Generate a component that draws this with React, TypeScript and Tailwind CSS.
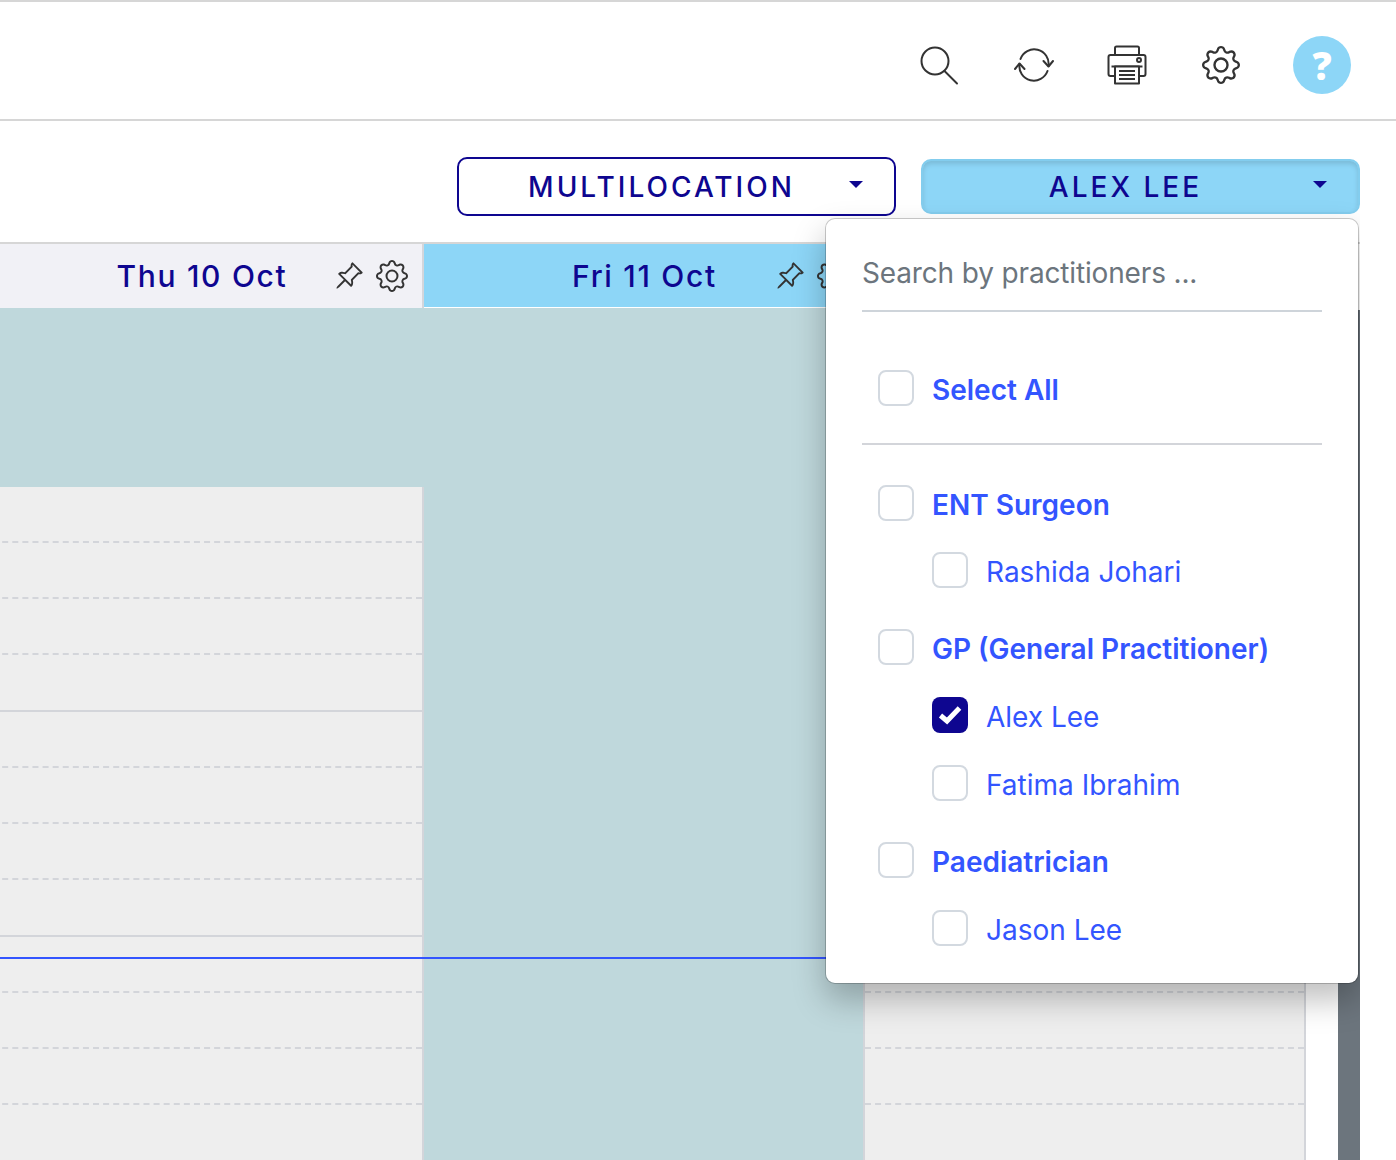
import { BsGear, BsPinAngle } from "react-icons/bs";

const navy = "text-[#0e0690]";

function SearchIcon() {
  return (
    <svg width="40" height="40" viewBox="0 0 40 40" fill="none" stroke="#333" strokeWidth="2">
      <circle cx="16" cy="16" r="13.5" />
      <path d="M25.5 26 L38 38.5" strokeLinecap="round" />
    </svg>
  );
}

function SyncIcon() {
  return (
    <svg className="ml-[2px]" width="40" height="34" viewBox="0 0 40 34" fill="none" stroke="#333" strokeWidth="2" strokeLinecap="round" strokeLinejoin="round">
      <path d="M6.500 11 A14.500 14.500 0 0 1 34.500 18" />
      <path d="M33.500 23 A14.500 14.500 0 0 1 5.500 16" />
      <path d="M29.500 13 L34.500 18.500 L39 13" />
      <path d="M1 21 L5.500 15.500 L10.500 21" />
    </svg>
  );
}

function PrinterIcon() {
  return (
    <svg width="40" height="40" viewBox="0 0 40 40" fill="none" stroke="#333" strokeWidth="2" strokeLinejoin="round">
      <path d="M8 10 V3 Q8 1.500 9.500 1.500 H30.500 Q32 1.500 32 3 V10" />
      <path d="M8 31 H3.500 Q1.500 31 1.500 29 V12 Q1.500 10 3.500 10 H36.500 Q38.500 10 38.500 12 V29 Q38.500 31 36.500 31 H32" fill="#fff" />
      <circle cx="32" cy="15" r="2" />
      <path d="M4.500 21.500 H35.500" />
      <rect x="8" y="21.500" width="24" height="17" fill="#fff" />
      <path d="M12 26 H28 M12 30 H28 M12 34 H28" />
    </svg>
  );
}

function Caret() {
  return <span className="w-0 h-0 border-x-[7px] border-x-transparent border-t-[7px] border-t-[#0e0690]" />;
}

function DayHeader({ label, active }: { label: string; active?: boolean }) {
  return (
    <div className={`grid grid-cols-[1fr_auto_1fr] items-center h-[64px] ${active ? "bg-[#8dd6f7] border-b border-white" : "bg-[#f1f1f6] border-r-2 border-[#d4d6db]"}`}>
      <span />
      <span className={`font-medium text-[30px] tracking-[1.7px] leading-none ${navy}`}>{label}</span>
      <div className={`flex justify-end items-center gap-[12px] text-[#333] ${active ? "pr-[16px]" : "pr-[14px]"}`}>
        <BsPinAngle size={30} />
        <BsGear size={32} />
      </div>
    </div>
  );
}

function Slots({ solid }: { solid: boolean }) {
  return (
    <>
      <div className="h-[56px] border-b-2 border-dashed border-[#d3d5da]" />
      <div className="h-[56px] border-b-2 border-dashed border-[#d3d5da]" />
      <div className="h-[56px] border-b-2 border-dashed border-[#d3d5da]" />
      {solid ? <div className="h-[57px] border-b-2 border-[#d3d5da]" /> : <div className="h-[56px]" />}
    </>
  );
}

function CheckRow({ label, bold, child, checked, className }: { label: string; bold?: boolean; child?: boolean; checked?: boolean; className?: string }) {
  return (
    <label className={`flex items-center h-[36px] ${child ? "pl-[70px]" : "pl-[16px]"} ${className ?? ""}`}>
      {checked ? (
        <span className="w-[36px] h-[36px] rounded-[8px] bg-[#0e0690] flex items-center justify-center shrink-0">
          <svg width="24" height="20" viewBox="0 0 24 20" fill="none" stroke="#fff" strokeWidth="5">
            <path d="M2.500 10.500 L9 16 L21.500 3" />
          </svg>
        </span>
      ) : (
        <span className="w-[36px] h-[36px] rounded-[8px] border-2 border-[#d3d9e0] bg-white shrink-0" />
      )}
      <span className={`ml-[18px] pt-[3px] text-[#3355ff] text-[28px] leading-none whitespace-nowrap ${bold ? "font-semibold" : "font-normal"}`}>{label}</span>
    </label>
  );
}

export default function App() {
  return (
    <div className="w-[1396px] h-[1160px] overflow-hidden bg-white font-['Inter',sans-serif]">
      <header className="h-[121px] border-t-2 border-b-2 border-[#d6d6d6] flex items-center justify-end pt-[9px] pr-[44px]">
        <div className="w-[94px] flex justify-center"><SearchIcon /></div>
        <div className="w-[94px] flex justify-center"><SyncIcon /></div>
        <div className="w-[94px] flex justify-center"><PrinterIcon /></div>
        <div className="w-[94px] flex justify-center"><BsGear size={38} className="text-[#333]" /></div>
        <div className="w-[60px] ml-[24px] flex justify-center">
          <span className="w-[58px] h-[58px] rounded-full bg-[#8dd6f7] flex items-center justify-center text-white text-[38px] font-extrabold leading-none font-['Open_Sans',sans-serif]">?</span>
        </div>
      </header>

      <div className="relative w-[1360px] h-[1039px] overflow-hidden">
        <div className="h-[121px] flex items-center justify-end gap-[25px] pt-[9px]">
          <button className="relative w-[439px] h-[59px] rounded-[10px] border-2 border-[#0e0690] bg-white flex items-center justify-center pr-[30px] pt-[2px]">
            <span className={`font-medium text-[28px] tracking-[3px] ${navy}`}>MULTILOCATION</span>
            <span className="absolute right-[31px] top-[22px] flex"><Caret /></span>
          </button>
          <button className="relative w-[439px] h-[55px] rounded-[10px] border-2 border-[#83cdee] bg-[#8dd6f7] shadow-[inset_0_3px_5px_rgba(0,0,0,0.125)] flex items-center justify-center pr-[30px] pt-[2px]">
            <span className={`font-medium text-[28px] tracking-[3px] ${navy}`}>ALEX LEE</span>
            <span className="absolute right-[31px] top-[20px] flex"><Caret /></span>
          </button>
        </div>

        <div className="flex ml-[-18px] border-t-2 border-[#d6d6d6] w-[1378px]">
          <div className="w-[442px] shrink-0">
            <DayHeader label="Thu 10 Oct" />
            <div className="h-[179px] bg-[#bfd8dc] border-r-2 border-[#bfd8dc]" />
            <div className="bg-[#eeeeee] border-r-2 border-[#d3d5da] h-[800px]">
              <Slots solid />
              <Slots solid />
              <Slots solid={false} />
            </div>
          </div>
          <div className="w-[441px] shrink-0">
            <DayHeader label="Fri 11 Oct" active />
            <div className="h-[979px] bg-[#bfd8dc] border-r-2 border-[#d3d5da]" />
          </div>
          <div className="w-[441px] shrink-0">
            <div className="h-[64px] bg-[#f1f1f6]" />
            <div className="h-[179px] bg-[#bfd8dc]" />
            <div className="bg-[#eeeeee] border-r-2 border-[#d3d5da] h-[800px]">
              <Slots solid />
              <Slots solid />
              <Slots solid={false} />
            </div>
          </div>
          <div className="w-[32px] shrink-0" />
          <div className="w-[22px] shrink-0 bg-[#6c757d] mt-[66px]" />
        </div>

        {/* current time line */}
        <div className="absolute left-0 top-[836px] w-[1305px] h-[2px] bg-[#3355ff]" />

        {/* practitioner dropdown */}
        <div className="absolute left-[825px] top-[97px] w-[534px] h-[766px] bg-white bg-clip-padding rounded-[10px] border border-[rgba(0,0,0,0.2)] shadow-[0_16px_32px_rgba(0,0,0,0.25)] pt-[34px] px-[36px]">
          <div className="h-[59px] border-b-2 border-[#ced4da] text-[28px] tracking-[-0.15px] leading-[40px] text-[#6c757d] whitespace-nowrap">Search by practitioners ...</div>
          <CheckRow className="mt-[58px]" label="Select All" bold />
          <div className="mt-[37px] border-b-2 border-[#d3d5da]" />
          <CheckRow className="mt-[40px]" label="ENT Surgeon" bold />
          <CheckRow className="mt-[31px]" label="Rashida Johari" child />
          <CheckRow className="mt-[41px]" label="GP (General Practitioner)" bold />
          <CheckRow className="mt-[32px]" label="Alex Lee" child checked />
          <CheckRow className="mt-[32px]" label="Fatima Ibrahim" child />
          <CheckRow className="mt-[41px]" label="Paediatrician" bold />
          <CheckRow className="mt-[32px]" label="Jason Lee" child />
        </div>
      </div>
    </div>
  );
}
